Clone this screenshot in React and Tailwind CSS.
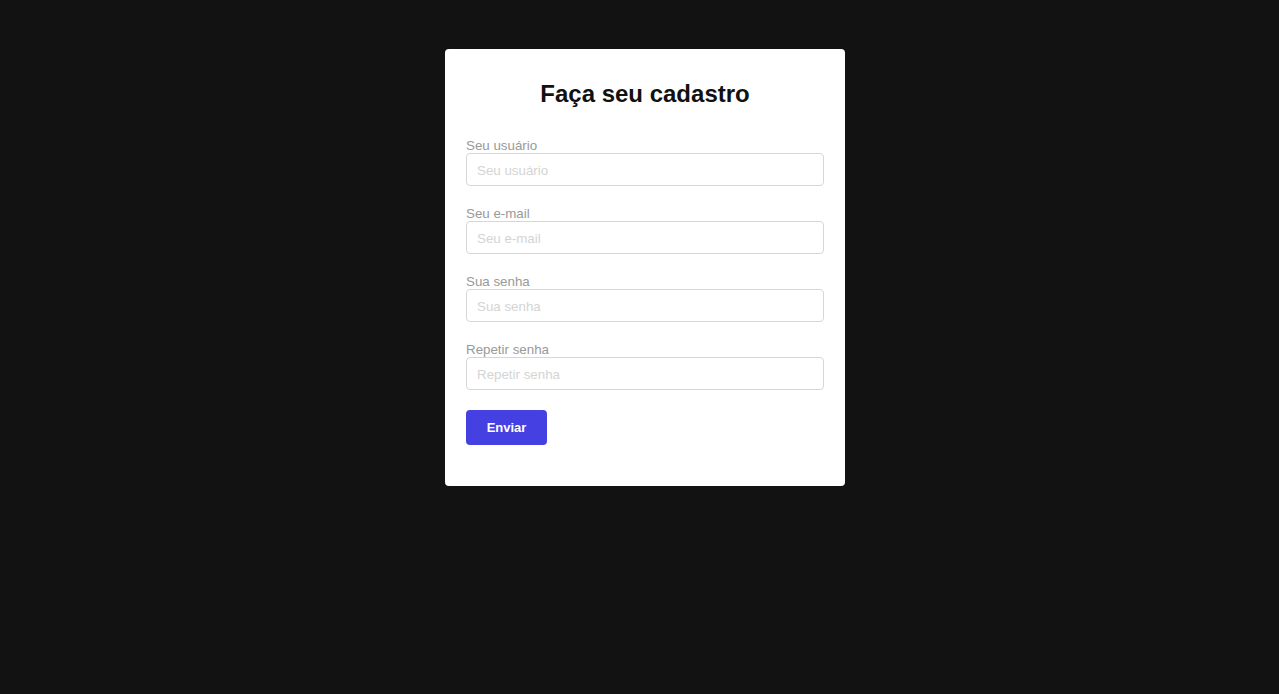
const fields = [
  { label: "Seu usuário", type: "text" },
  { label: "Seu e-mail", type: "email" },
  { label: "Sua senha", type: "password" },
  { label: "Repetir senha", type: "password" },
];

const App = () => {
  return (
    <div className="min-h-screen bg-[#121212] flex justify-center pt-[49px] pl-[11px] font-['Liberation_Sans',Arial,sans-serif]">
      <div className="w-[400px] h-fit bg-white rounded px-[21px] pt-[29px] pb-[41px]">
        <h1 className="text-center text-[24px] leading-[32px] font-bold text-[#111]">
          Faça seu cadastro
        </h1>

        <form className="mt-[26px]" onSubmit={(e) => e.preventDefault()}>
          {fields.map((f) => (
            <div key={f.label} className="mb-[18px]">
              <label className="block pt-[2px] text-[13.33px] leading-[15px] text-[#999]">
                {f.label}
              </label>
              <input
                type={f.type}
                placeholder={f.label}
                className="block w-full h-[33px] pt-px px-[10px] text-[13.33px] border border-[#d6d6d6] rounded placeholder:text-[#d4d4d4] outline-none"
              />
            </div>
          ))}

          <button
            type="submit"
            className="mt-[2px] w-[81px] h-[35px] rounded bg-[#4540e1] text-white text-[13px] font-bold"
          >
            Enviar
          </button>
        </form>
      </div>
    </div>
  );
};

export default App;
